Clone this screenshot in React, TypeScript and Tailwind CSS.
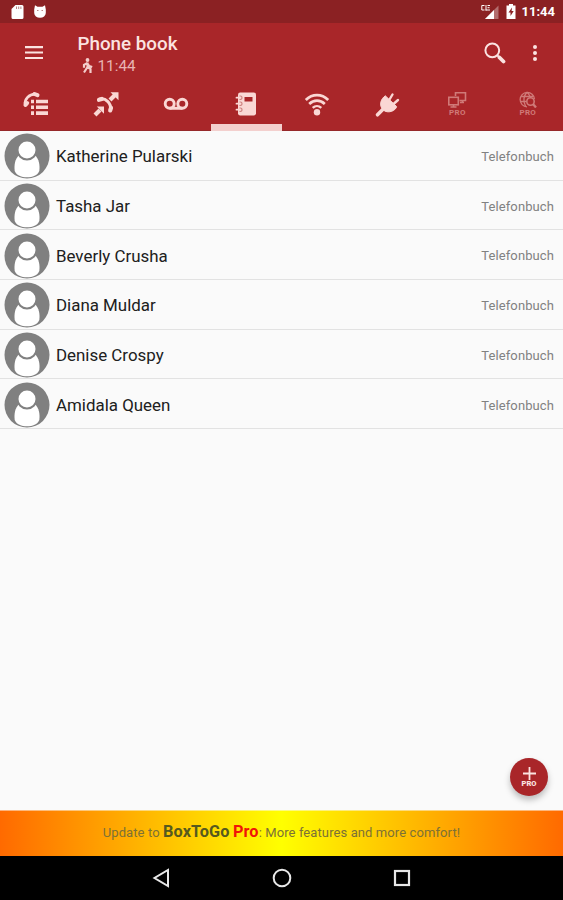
import type { ReactNode } from "react"

const contacts = ["Katherine Pularski", "Tasha Jar", "Beverly Crusha", "Diana Muldar", "Denise Crospy", "Amidala Queen"]

function TabIcon({ children }: { children: ReactNode }) {
  return (
    <svg width="26" height="26" viewBox="0 0 26 26" fill="none" stroke="currentColor" className="shrink-0 overflow-visible">
      {children}
    </svg>
  )
}

function CallListIcon() {
  return (
    <TabIcon>
      <path d="M3.200 13.500C2.200 8.500 7 3 13.500 3.200" strokeWidth="2.800" />
      <path d="M3.500 14l1.700-2M12.500 3l3 1.200" strokeWidth="4" strokeLinecap="round" />
      <path d="M9 10.500h3M9 16.300h3M9 22.100h3M14 10.500h12M14 16.300h12M14 22.100h12" strokeWidth="3.600" />
    </TabIcon>
  )
}

function CallsIcon() {
  return (
    <TabIcon>
      <path d="M6.500 8.200C12.500 6.500 18.500 12 17.500 19" strokeWidth="3" />
      <path d="M6 8.800l2.800-.8M18 16.800l-.8 2.600" strokeWidth="4.200" strokeLinecap="round" />
      <path d="M2 24l5-5M17 9l5-5" strokeWidth="4.200" />
      <path d="M3.800 15.500H11v7.200zM17.500 1.300h8v8z" fill="currentColor" stroke="none" />
    </TabIcon>
  )
}

function VoicemailIcon() {
  return (
    <TabIcon>
      <circle cx="6.700" cy="12.800" r="4.500" strokeWidth="2.900" />
      <circle cx="19.300" cy="12.800" r="4.500" strokeWidth="2.900" />
      <path d="M6.700 17.300h12.600" strokeWidth="2.900" />
    </TabIcon>
  )
}

function NotebookIcon() {
  return (
    <TabIcon>
      <rect x="5" y="1.500" width="18" height="23" rx="2.200" fill="currentColor" stroke="none" />
      <rect x="11.500" y="6" width="8" height="4.500" stroke="none" className="fill-[#a92629]" />
      <path d="M6.500 5.200a1.700 1.700 0 1 1 0 3M6.500 11.200a1.700 1.700 0 1 1 0 3M6.500 17.200a1.700 1.700 0 1 1 0 3" className="stroke-[#cf8583]" strokeWidth="1.200" />
      <path d="M3.500 6.700h3.500M3.500 12.700h3.500M3.500 18.700h3.500" strokeWidth="1.800" strokeLinecap="round" />
    </TabIcon>
  )
}

function WifiIcon() {
  return (
    <TabIcon>
      <path d="M1.800 8.900C8.300 2.500 17.700 2.500 24.200 8.900" strokeWidth="2.800" />
      <path d="M5.200 13C9.800 8.600 16.200 8.600 20.800 13" strokeWidth="2.700" />
      <path d="M8.700 16.800C11.200 14.500 14.800 14.500 17.300 16.800" strokeWidth="2.400" />
      <circle cx="13" cy="21.200" r="3.200" fill="currentColor" stroke="none" />
    </TabIcon>
  )
}

function PlugIcon() {
  return (
    <TabIcon>
      <path d="M3.500 23.800l6-6" strokeWidth="3.600" strokeLinecap="round" />
      <path d="M15.500 8.500l3-5M19.500 13l4.500-4" strokeWidth="2.400" strokeLinecap="round" />
      <path d="M11.300 4.800L22.600 15.500c-.6 4.200-9 7.800-13.600 3.200S7.200 7.500 11.300 4.800z" fill="currentColor" strokeWidth="1" strokeLinejoin="round" />
    </TabIcon>
  )
}

function ScreensIcon() {
  return (
    <svg width="20" height="17" viewBox="0 0 20 17" fill="none" stroke="currentColor" strokeWidth="1.600">
      <path d="M8.500 5V1.800H18.500V9.500h-6M15.500 9.500v2M13 11.500h4" />
      <rect x="1.800" y="6.300" width="9.500" height="7.500" />
      <path d="M6.500 13.800V16M3.500 16h6" />
    </svg>
  )
}

function GlobeSearchIcon() {
  return (
    <svg width="20" height="17" viewBox="0 0 20 17" fill="none" stroke="currentColor" strokeWidth="1.300">
      <path d="M9 15.800A7.200 7.200 0 1 1 16.500 8M3 5.500h12M2.300 10.500H8M7.500 15C4.500 10 6 4 9 1.500c2 1.500 3 3 3.500 5" />
      <circle cx="12.500" cy="10.500" r="3.700" strokeWidth="1.600" />
      <path d="M15 13l3 3.500" strokeWidth="2.300" />
    </svg>
  )
}

function ProTab({ children }: { children: ReactNode }) {
  return (
    <div className="flex flex-col items-center text-[#d07a78]">
      {children}
      <span className="text-[8px] leading-[9px] font-bold tracking-[0.300px]">PRO</span>
    </div>
  )
}

function StatusBar() {
  return (
    <div className="flex h-[23px] items-center bg-[#8b2123] pl-[11px] pr-[8px] text-white">
      <svg width="13" height="16" viewBox="0 0 13 16">
        <path d="M4.500 1H11a1.500 1.500 0 0 1 1.500 1.500v11A1.500 1.500 0 0 1 11 15H2a1.500 1.500 0 0 1-1.500-1.500V5z" fill="currentColor" />
        <path d="M5.500 2.500v2.500M7.700 2.500v2.500M9.900 2.500v2.500" className="stroke-[#b98584]" />
      </svg>
      <svg width="14" height="16" viewBox="0 0 14 16" className="ml-[9px]">
        <path d="M1.200 5.500L2 1.200l2.500 1.500h5L12 1.200l.8 4.300V9a5.800 4.800 0 0 1-11.600 0z" fill="currentColor" />
        <path d="M4 6.500h1.500M8.500 6.500H10" className="stroke-[#b98584]" />
      </svg>
      <div className="ml-auto flex items-center">
        <svg width="18" height="16" viewBox="0 0 18 16">
          <path d="M17.500 1.500V15H4z" fill="currentColor" opacity=".35" />
          <path d="M13 6v9H4z" fill="currentColor" />
          <path d="M3.500 1.500H.8v4.500H3.500M5 1v5.500M4.500 6H9M9 1.500H6.500M6.500 3.700H8.500" fill="none" stroke="currentColor" />
        </svg>
        <svg width="10" height="15" viewBox="0 0 10 15" className="ml-[7px]">
          <path d="M3 0h4v1.500h2.500V15H.5V1.500H3z" fill="currentColor" />
          <path d="M6 3.500L2.500 8.500h2V12l3.200-5H5.600z" className="fill-[#8b2123]" />
        </svg>
        <span className="ml-[6px] text-[13px] leading-[16px] font-bold">11:44</span>
      </div>
    </div>
  )
}

function Toolbar() {
  return (
    <div className="flex h-[58px] items-start pl-[25px] text-[#fbe3e1]">
      <svg width="18" height="14" viewBox="0 0 18 14" stroke="currentColor" strokeWidth="2.200" className="mt-[23px]">
        <path d="M0 1.200h18M0 6.500h18M0 12h18" />
      </svg>
      <div className="ml-[34.500px] pt-[10px]">
        <h1 className="text-[18.800px] leading-[22px] font-medium">Phone book</h1>
        <div className="flex h-[21px] items-center text-[#e8b4b2]">
          <svg width="11" height="16" viewBox="0 0 11 16" fill="none" stroke="currentColor" strokeWidth="2.200" className="ml-[4px] text-[#f3cdcb]">
            <circle cx="5.500" cy="2" r="1.900" fill="currentColor" stroke="none" />
            <path d="M5.500 4.500v5M5.500 5L2 6.800v3M5.500 5.500l1.700 2.500 3 1M5.500 9L2 14.500M5.500 9l3 2v4" />
          </svg>
          <span className="ml-[5px] pt-px text-[15.300px] leading-[20px]">11:44</span>
        </div>
      </div>
      <svg width="22" height="23" viewBox="0 0 22 23" fill="none" stroke="currentColor" className="ml-auto mt-[19px]">
        <circle cx="8.300" cy="8.300" r="6.900" strokeWidth="2" />
        <path d="M13 13l2.500 2.500" strokeWidth="2" />
        <path d="M15.500 15.500l4 4" strokeWidth="3.800" strokeLinecap="round" />
      </svg>
      <svg width="4" height="17" viewBox="0 0 4 17" fill="currentColor" className="ml-[27px] mr-[26px] mt-[22px]">
        <circle cx="2" cy="2" r="2" />
        <circle cx="2" cy="8" r="2" />
        <circle cx="2" cy="14" r="2" />
      </svg>
    </div>
  )
}

const tabs = [
  <CallListIcon />,
  <CallsIcon />,
  <VoicemailIcon />,
  <NotebookIcon />,
  <WifiIcon />,
  <PlugIcon />,
  <ProTab><ScreensIcon /></ProTab>,
  <ProTab><GlobeSearchIcon /></ProTab>,
]

function Avatar() {
  return (
    <svg width="46" height="46" viewBox="0 0 46 46" className="shrink-0">
      <circle cx="23" cy="23" r="22.500" fill="#808080" />
      <path d="M15 22.500h16c4 3.200 5 9.500 4.300 15.500C33.500 42.500 28.500 44.300 23 44.300S12.500 42.500 10.700 38C10 32 11 25.700 15 22.500z" fill="#fff" />
      <circle cx="23" cy="17" r="9.500" fill="#fff" stroke="#808080" strokeWidth="2" />
    </svg>
  )
}

export default function App() {
  return (
    <div className="flex h-[900px] w-[563px] flex-col overflow-hidden bg-[#fafafa] font-[Roboto,sans-serif]">
      <header className="bg-[#a92629]">
        <StatusBar />
        <Toolbar />
        <nav className="grid h-[50px] grid-cols-8 border-b border-[#96282a] text-[#fad7d4]">
          {tabs.map((tab, i) => (
            <div
              key={i}
              className={`flex justify-center pt-[10px] ${i === 3 ? "-mb-px shadow-[inset_0_-7px_0_#f3d0ce]" : ""}`}
            >
              {tab}
            </div>
          ))}
        </nav>
      </header>

      <main className="relative flex-1">
        <ul>
          {contacts.map((name) => (
            <li key={name} className="flex h-[49.700px] items-center border-b border-[#e2e2e2] pl-[4px] pr-[9px] pt-[2px]">
              <Avatar />
              <span className="ml-[6px] text-[16.900px] leading-[20px] text-[#202020]">{name}</span>
              <span className="ml-auto pt-px text-[13px] tracking-[0.100px] text-[#818181]">Telefonbuch</span>
            </li>
          ))}
        </ul>

        {/* Add contact */}
        <button className="absolute right-[15px] bottom-[14px] flex size-[38px] flex-col items-center rounded-full bg-[#a92629] pt-[9px] text-[#fbe3e1] shadow-[0_4px_6px_rgba(0,0,0,0.25)]">
          <svg width="13" height="13" viewBox="0 0 13 13" stroke="currentColor" strokeWidth="1.800">
            <path d="M6.500 0v13M0 6.500h13" />
          </svg>
          <span className="text-[7.500px] leading-[7px] font-black">PRO</span>
        </button>
      </main>

      <div className="flex h-[46px] items-center justify-center border-t border-[#fafafa]/50 bg-[linear-gradient(90deg,#ff6a00_0%,#ffff00_50%,#ff6a00_100%)] pb-[2px] text-[13px] text-[#7c7136]">
        <p className="whitespace-pre leading-[20px] tracking-[0.100px]">
          Update to <b className="text-[16.300px] font-bold text-[#55591f]">BoxToGo</b>{" "}
          <b className="text-[16.300px] font-bold text-[#f01408]">Pro</b>: More features and more comfort!
        </p>
      </div>

      <footer className="flex h-[44px] items-center bg-black pl-[152px] text-[#e8e8e8]">
        <svg width="18" height="20" viewBox="0 0 18 20" fill="none" stroke="currentColor" strokeWidth="2">
          <path d="M16 2v16L2.500 10z" />
        </svg>
        <svg width="20" height="20" viewBox="0 0 20 20" fill="none" stroke="currentColor" strokeWidth="2" className="ml-[102px]">
          <circle cx="10" cy="10" r="8.300" />
        </svg>
        <svg width="18" height="18" viewBox="0 0 18 18" fill="none" stroke="currentColor" strokeWidth="2.200" className="ml-[101px]">
          <rect x="2" y="2" width="14" height="14" />
        </svg>
      </footer>
    </div>
  )
}
